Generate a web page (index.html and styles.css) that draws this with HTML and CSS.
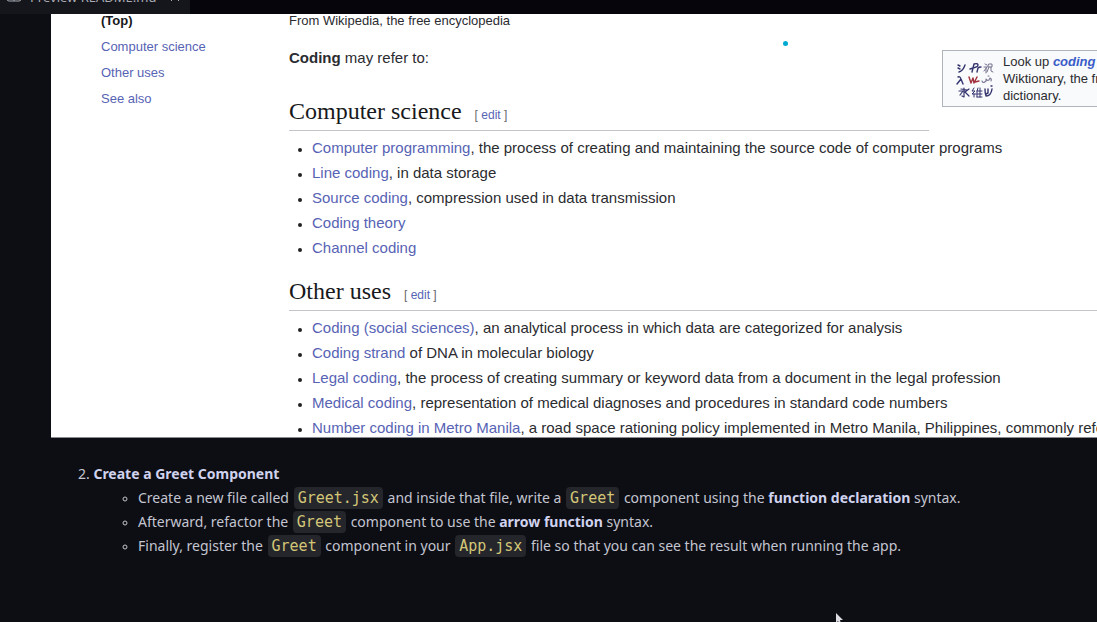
FILE: index.html
```html
<!DOCTYPE html>
<html lang="en">
<head>
<meta charset="utf-8">
<title>Preview README.md</title>
<link rel="stylesheet" href="styles.css">
</head>
<body>
<header class="tabbar">
  <div class="tab">
    <svg class="tab-icon" viewBox="0 0 16 16" aria-hidden="true"><rect x="1" y="2" width="14" height="13" rx="2"/><path d="M8 2v13M10 12h4"/></svg>
    <span>Preview README.md</span>
    <svg class="tab-close" viewBox="0 0 10 10" aria-hidden="true"><path d="M1 1l8 8M9 1l-8 8"/></svg>
  </div>
</header>
<main class="preview">
  <div class="wiki">
    <nav class="contents">
      <strong>(Top)</strong>
      <a href="#computer-science">Computer science</a>
      <a href="#other-uses">Other uses</a>
      <a href="#see-also">See also</a>
    </nav>
    <article class="article">
      <p class="tagline">From Wikipedia, the free encyclopedia</p>
      <aside class="lookup">
        <svg class="tiles" viewBox="0 0 40 38" aria-hidden="true">
          <g fill="none" stroke="#34346e" stroke-width="1.4" stroke-linecap="round" stroke-linejoin="round">
            <path d="M3 5l2 1M3 8l2 1M4 12q4-1 6-7"/>
            <path d="M17 12l2-8q4-1 4 1t-5 3M22 12l1-4q1-1 3-1M15 9l3-1"/>
            <path d="M30 4l2 1M29 7h3l-3 4M31 8v5M34 4h3v3h-4zM34 7l-2 5M36 7v4l2 1" stroke="#74748f" stroke-width="1"/>
            <path d="M3 17q2-1 3 2l2 5M6 19l-4 5"/>
            <path d="M14 17l2 6 2-5 1 5 3-6M20 22l4-1" stroke="#a0303c"/>
            <path d="M27 21q1 3 4 0v-2q1 2 3 1l1-2q2 1 1 3M33 16h1" stroke="#777794" stroke-width="1.1"/>
            <path d="M9 28v9l-2-1M4 31h4l-3 4M14 29l-4 3 4 4M6 29l6 1" stroke-width="1.2"/>
            <path d="M19 28l-2 3h3l-3 3h4M19 34v3M23 28l-1 3v6M22 31h5M22 34h5M22 37h5M25 28v9" stroke-width="1"/>
            <path d="M30 29q0 5 1 7 5 0 6-7M33 29v4l-2 1M36 26h1"/>
          </g>
        </svg>
        <p>Look up <a href="#coding"><b><i>coding</i></b></a> in<br>Wiktionary, the free<br>dictionary.</p>
      </aside>
      <p class="intro"><b>Coding</b> may refer to:</p>
      <div class="heading" id="computer-science"><h2>Computer science</h2><span class="edit">[ <a href="#edit-1">edit</a> ]</span></div>
      <ul class="terms">
        <li><a href="#programming">Computer programming</a>, the process of creating and maintaining the source code of computer programs</li>
        <li><a href="#line">Line coding</a>, in data storage</li>
        <li><a href="#source">Source coding</a>, compression used in data transmission</li>
        <li><a href="#theory">Coding theory</a></li>
        <li><a href="#channel">Channel coding</a></li>
      </ul>
      <div class="heading" id="other-uses"><h2>Other uses</h2><span class="edit">[ <a href="#edit-2">edit</a> ]</span></div>
      <ul class="terms">
        <li><a href="#social">Coding (social sciences)</a>, an analytical process in which data are categorized for analysis</li>
        <li><a href="#strand">Coding strand</a> of DNA in molecular biology</li>
        <li><a href="#legal">Legal coding</a>, the process of creating summary or keyword data from a document in the legal profession</li>
        <li><a href="#medical">Medical coding</a>, representation of medical diagnoses and procedures in standard code numbers</li>
        <li><a href="#manila">Number coding in Metro Manila</a>, a road space rationing policy implemented in Metro Manila, Philippines, commonly referred</li>
      </ul>
    </article>
    <span class="dot"></span>
  </div>
  <section class="task">
    <p class="task-title">2. <strong>Create a Greet Component</strong></p>
    <ul class="steps">
      <li>Create a new file called <code>Greet.jsx</code> and inside that file, write a <code>Greet</code> component using the <strong>function declaration</strong> syntax.</li>
      <li>Afterward, refactor the <code>Greet</code> component to use the <strong>arrow function</strong> syntax.</li>
      <li>Finally, register the <code>Greet</code> component in your <code>App.jsx</code> file so that you can see the result when running the app.</li>
    </ul>
  </section>
</main>
<svg class="pointer" viewBox="0 0 8 12" aria-hidden="true"><path d="M1 0v10l2-2 2 4 1-1-1-4h3z"/></svg>
</body>
</html>
```
FILE: styles.css
```css
* { box-sizing: border-box; }
html, body { height: 100%; }
body {
  margin: 0;
  overflow: hidden;
  background: #0d0d14;
  color: #c8cad8;
  font: 14px/24px "Noto Sans", sans-serif;
}
p, ul, h2 { margin: 0; padding: 0; }
a { color: #5763b4; text-decoration: none; }

.tabbar { display: flex; height: 14px; background: #05050b; }
.tab {
  display: flex;
  align-items: flex-end;
  gap: 8px;
  width: 190px;
  padding: 0 8px 9px 6px;
  overflow: hidden;
  background: #15161c;
  color: #a9abb5;
  font-size: 13px;
  line-height: 16px;
  white-space: nowrap;
}
.tab-icon { flex: none; width: 16px; height: 16px; margin-bottom: 3px; }
.tab-close { flex: none; width: 10px; height: 10px; margin: 0 0 3px 6px; }
.tab svg { fill: none; stroke: #a9abb5; stroke-width: 1; }

.wiki {
  position: relative;
  display: grid;
  grid-template-columns: 188px 1fr;
  margin-left: 51px;
  padding-left: 50px;
  overflow: hidden;
  background: #fff;
  border-bottom: 1px solid #8a8a90;
  color: #2b2c30;
  font: 15px/25px "Liberation Sans", Arial, sans-serif;
  white-space: nowrap;
}
.contents {
  display: flex;
  flex-direction: column;
  font-size: 13px;
  line-height: 26px;
  margin-top: -6px;
}
.contents strong { color: #17181c; }
.article { min-width: 0; }
.tagline { font-size: 13px; line-height: 14px; margin-bottom: 22px; }
.lookup {
  display: flex;
  align-items: center;
  float: right;
  gap: 8px;
  width: 155px;
  height: 57px;
  margin-left: 13px;
  padding-left: 12px;
  overflow: hidden;
  border: 1px solid #b0b5bb;
  border-right: 0;
  background: #f9fafb;
  font-size: 13px;
  line-height: 17px;
}
.lookup a { color: #3a5cc8; }
.tiles { flex: none; width: 40px; height: 38px; }
.intro { line-height: 16px; }
.heading {
  display: flow-root;
  margin-top: 31px;
  padding-bottom: 1px;
  border-bottom: 1px solid #c3c5ca;
  line-height: 28px;
}
.heading h2 {
  display: inline;
  color: #18191c;
  font: 24px/28px "Liberation Serif", Georgia, serif;
}
.edit { margin-left: 13px; font-size: 12px; color: #66676c; }
.terms { padding: 4px 0 0 23px; }
.terms + .heading { margin-top: 17px; }
.terms:last-child { margin-bottom: -3px; }
.terms li::marker { color: #222; font-size: 12px; }
.dot {
  position: absolute;
  left: 732px;
  top: 27px;
  width: 5px;
  height: 5px;
  border-radius: 50%;
  background: #00a9d1;
}

.task { padding: 24px 16px 0 78px; color: #c3c5d0; }
.task strong { color: #d0d3ee; }
.steps { padding-left: 60px; list-style: circle; }
.steps li::marker { font-size: 12px; }
code {
  margin: 0 1px;
  padding: 2px 4px;
  border-radius: 4px;
  background: #25252c;
  color: #d3c777;
  font: 15px/18px "DejaVu Sans Mono", monospace;
}
.pointer { position: absolute; left: 835px; top: 613px; width: 8px; height: 12px; fill: #dcdce2; }
```
